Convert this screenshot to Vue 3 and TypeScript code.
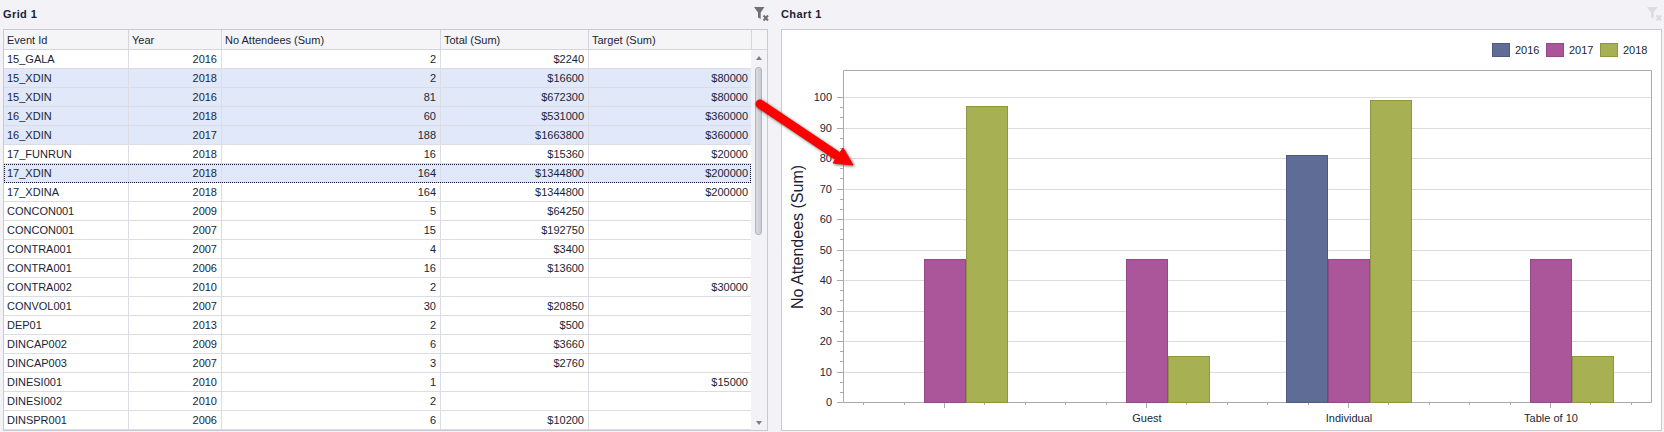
<script setup lang="ts">
type Row = { id: string; year: number; n: number; total: string; target: string; sel?: boolean; focus?: boolean };

const rows: Row[] = [
  { id: '15_GALA', year: 2016, n: 2, total: '$2240', target: '' },
  { id: '15_XDIN', year: 2018, n: 2, total: '$16600', target: '$80000', sel: true },
  { id: '15_XDIN', year: 2016, n: 81, total: '$672300', target: '$80000', sel: true },
  { id: '16_XDIN', year: 2018, n: 60, total: '$531000', target: '$360000', sel: true },
  { id: '16_XDIN', year: 2017, n: 188, total: '$1663800', target: '$360000', sel: true },
  { id: '17_FUNRUN', year: 2018, n: 16, total: '$15360', target: '$20000' },
  { id: '17_XDIN', year: 2018, n: 164, total: '$1344800', target: '$200000', sel: true, focus: true },
  { id: '17_XDINA', year: 2018, n: 164, total: '$1344800', target: '$200000' },
  { id: 'CONCON001', year: 2009, n: 5, total: '$64250', target: '' },
  { id: 'CONCON001', year: 2007, n: 15, total: '$192750', target: '' },
  { id: 'CONTRA001', year: 2007, n: 4, total: '$3400', target: '' },
  { id: 'CONTRA001', year: 2006, n: 16, total: '$13600', target: '' },
  { id: 'CONTRA002', year: 2010, n: 2, total: '', target: '$30000' },
  { id: 'CONVOL001', year: 2007, n: 30, total: '$20850', target: '' },
  { id: 'DEP01', year: 2013, n: 2, total: '$500', target: '' },
  { id: 'DINCAP002', year: 2009, n: 6, total: '$3660', target: '' },
  { id: 'DINCAP003', year: 2007, n: 3, total: '$2760', target: '' },
  { id: 'DINESI001', year: 2010, n: 1, total: '', target: '$15000' },
  { id: 'DINESI002', year: 2010, n: 2, total: '', target: '' },
  { id: 'DINSPR001', year: 2006, n: 6, total: '$10200', target: '' },
];

const headers = ['Event Id', 'Year', 'No Attendees (Sum)', 'Total (Sum)', 'Target (Sum)', ''];

const left = 843;
const right = 1651;
const top = 70;
const base = 402;
const unit = 3.05;
const catW = (right - left) / 4;
const barW = catW / 5;
const barStep = 42;
const yOf = (v: number) => base - v * unit;

const series = [
  { name: '2016', fill: '#5f6c96', stroke: '#4c5a85', x: 1492 },
  { name: '2017', fill: '#ab569b', stroke: '#944a87', x: 1546 },
  { name: '2018', fill: '#a8b054', stroke: '#8f9640', x: 1600 },
];

const cats = [
  { label: '', v: [0, 47, 97] },
  { label: 'Guest', v: [0, 47, 15] },
  { label: 'Individual', v: [81, 47, 99] },
  { label: 'Table of 10', v: [0, 47, 15] },
];

const bars = cats.flatMap((c, i) =>
  c.v.flatMap((v, s) =>
    v > 0
      ? [{
          key: `${i}-${s}`,
          x: Math.round(left + catW * (i + 0.5) + barStep * (s - 1) - 20.5) + 0.5,
          y: Math.round(yOf(v)) + 0.5,
          w: 41,
          h: base - Math.round(yOf(v)),
          fill: series[s].fill,
          stroke: series[s].stroke,
        }]
      : [],
  ),
);

const yMajor = Array.from({ length: 11 }, (_, i) => i * 10);
const yMinor = Array.from({ length: 31 }, (_, i) => i * (10 / 3)).filter((_, i) => i % 3 !== 0);
const xTicks = Array.from({ length: 20 }, (_, i) => ({
  x: Math.round(left + barW * (i + 0.5)) + 0.5,
  major: i % 5 === 2,
}));
</script>

<template>
  <div class="page">
    <section class="panel grid-panel">
      <header class="title">
        <span>Grid 1</span>
        <svg class="clear grid-clear" width="15" height="15" viewBox="0 0 15 15">
          <path d="M0 0H10.5L6.7 5.5V12L4 10.5V5.5Z" fill="#6f6f78" />
          <path d="M9.5 8.5L14 13.5M14 8.5L9.5 13.5" stroke="#6f6f78" stroke-width="2" fill="none" />
        </svg>
      </header>
      <div class="grid">
        <div class="head">
          <div v-for="(h, i) in headers" :key="i" class="hcell" :class="`c${i}`">{{ h }}</div>
        </div>
        <div class="body">
          <div class="rows">
            <div v-for="(r, i) in rows" :key="i" class="row" :class="{ sel: r.sel, focus: r.focus }">
              <div class="cell c0">{{ r.id }}</div>
              <div class="cell c1 num">{{ r.year }}</div>
              <div class="cell c2 num">{{ r.n }}</div>
              <div class="cell c3 num">{{ r.total }}</div>
              <div class="cell c4 num">{{ r.target }}</div>
            </div>
          </div>
          <div class="scrollbar">
            <span class="arrow up"></span>
            <span class="thumb"></span>
            <span class="arrow down"></span>
          </div>
        </div>
      </div>
    </section>

    <section class="panel chart-panel">
      <header class="title">
        <span>Chart 1</span>
        <svg class="clear" width="15" height="15" viewBox="0 0 15 15">
          <path d="M0 0H10.5L6.7 5.5V12L4 10.5V5.5Z" fill="#dcdce0" />
          <path d="M9.5 8.5L14 13.5M14 8.5L9.5 13.5" stroke="#dcdce0" stroke-width="2" fill="none" />
        </svg>
      </header>
      <div class="chart">
        <svg class="plot" width="879" height="400" viewBox="782 30 879 400">
          <g v-for="s in series" :key="s.name">
            <rect :x="s.x + 0.5" y="43.5" width="17" height="13" :fill="s.fill" :stroke="s.stroke" />
            <text :x="s.x + 23" y="54" class="lbl">{{ s.name }}</text>
          </g>

          <line v-for="v in yMajor.slice(1)" :key="v" :x1="left" :x2="right" :y1="Math.round(yOf(v)) + 0.5" :y2="Math.round(yOf(v)) + 0.5" class="gridline" />
          <path :d="`M${left + 0.5} ${top + 0.5}H${right + 0.5}V${base + 0.5}H${left + 0.5}Z`" class="frame" />

          <line v-for="v in yMajor" :key="'ma' + v" :x1="left - 6" :x2="left" :y1="Math.round(yOf(v)) + 0.5" :y2="Math.round(yOf(v)) + 0.5" class="tick" />
          <line v-for="v in yMinor" :key="'mi' + v" :x1="left - 3" :x2="left" :y1="Math.round(yOf(v)) + 0.5" :y2="Math.round(yOf(v)) + 0.5" class="tick" />
          <line v-for="t in xTicks" :key="t.x" :x1="t.x" :x2="t.x" :y1="base" :y2="base + (t.major ? 6 : 3)" class="tick" />

          <text v-for="v in yMajor" :key="'l' + v" x="832" :y="yOf(v) + 4" text-anchor="end" class="lbl">{{ v }}</text>

          <rect v-for="b in bars" :key="b.key" :x="b.x" :y="b.y" :width="b.w" :height="b.h" :fill="b.fill" :stroke="b.stroke" />

          <text v-for="(c, i) in cats" :key="'c' + i" :x="left + catW * (i + 0.5) + 1" y="422" text-anchor="middle" class="lbl">{{ c.label }}</text>

          <text class="axis-title" transform="translate(803 237) rotate(-90)" text-anchor="middle">No Attendees (Sum)</text>
        </svg>
      </div>
    </section>

    <svg class="callout" width="110" height="80" viewBox="0 0 110 80">
      <path d="M10 14L86 65" stroke="#f00" stroke-width="9" stroke-linecap="round" fill="none" />
      <path d="M93 58L103 75L83 73Z" fill="#f00" stroke="#f00" stroke-width="1" />
    </svg>
  </div>
</template>

<style scoped>
.page {
  position: relative;
  display: flex;
  gap: 13px;
  width: 1664px;
  height: 432px;
  padding: 0 2px 0 3px;
  box-sizing: border-box;
  background: #f3f3f7;
  color: #201f35;
  font: 11px "Liberation Sans", Arial, sans-serif;
  overflow: hidden;
}
.panel {
  display: flex;
  flex-direction: column;
}
.grid-panel {
  width: 765px;
  height: 430px;
}
.chart-panel {
  width: 881px;
  height: 431px;
}
.title {
  flex: 0 0 29px;
  display: flex;
  align-items: flex-start;
  justify-content: space-between;
  font-weight: 700;
  line-height: 28px;
  letter-spacing: 0.4px;
}
.clear {
  margin-top: 7px;
}
.grid-clear {
  margin-right: -1px;
}
.grid {
  flex: 1;
  display: flex;
  flex-direction: column;
  border: 1px solid #c9c9d2;
  background: #fff;
  box-sizing: border-box;
}
.head {
  display: flex;
  flex: 0 0 20px;
  box-sizing: border-box;
  background: #f5f5f8;
  border-bottom: 1px solid #d5d5de;
}
.hcell {
  box-sizing: border-box;
  padding: 1px 4px 0 3px;
  line-height: 18px;
  border-right: 1px solid #d5d5de;
  white-space: nowrap;
}
.hcell.c5 {
  flex: 1;
  border-right: 0;
}
.c0 { width: 125px; }
.c1 { width: 93px; }
.c2 { width: 219px; }
.c3 { width: 148px; }
.c4 { width: 163px; }
.body {
  flex: 1;
  display: flex;
  min-height: 0;
}
.rows {
  width: 747px;
  display: flex;
  flex-direction: column;
}
.row {
  display: flex;
  flex: 0 0 19px;
  box-sizing: border-box;
  border-bottom: 1px solid #dcdce5;
}
.row.sel {
  background: #e0e8fa;
}
.row.focus {
  outline: 1px dotted #14143a;
  outline-offset: -1px;
}
.cell {
  box-sizing: border-box;
  padding: 1px 4px 0 3px;
  line-height: 17px;
  border-right: 1px solid #dcdce5;
  white-space: nowrap;
  flex: none;
}
.cell.c4 {
  width: 162px;
  border-right: 0;
  padding-right: 3px;
}
.num {
  text-align: right;
}
.scrollbar {
  flex: 1;
  display: flex;
  flex-direction: column;
  align-items: center;
  background: #f3f3f7;
  padding-right: 1px;
}
.arrow {
  width: 0;
  height: 0;
  border-left: 3.5px solid transparent;
  border-right: 3.5px solid transparent;
}
.arrow.up {
  margin-top: 6px;
  border-bottom: 4px solid #7d7d88;
}
.arrow.down {
  margin-top: auto;
  margin-bottom: 5px;
  border-top: 4px solid #7d7d88;
}
.thumb {
  width: 7px;
  height: 168px;
  margin-top: 7px;
  box-sizing: border-box;
  border: 1px solid #b3b3bd;
  border-radius: 3px;
  background: linear-gradient(to right, #dcdce3, #c9c9d2);
}
.chart {
  flex: 1;
  border: 1px solid #c9c9d2;
  background: #fff;
  box-sizing: border-box;
}
.plot {
  display: block;
}
.lbl {
  font: 11px "Liberation Sans", Arial, sans-serif;
  fill: #201f35;
}
.axis-title {
  font: 16px "Liberation Sans", Arial, sans-serif;
  fill: #201f35;
}
.gridline {
  stroke: #dcdcdc;
}
.frame {
  fill: none;
  stroke: #aaaaaa;
}
.tick {
  stroke: #aaaaaa;
}
.callout {
  position: absolute;
  left: 750px;
  top: 90px;
  filter: drop-shadow(1.5px 1.5px 1.5px rgba(0, 0, 0, 0.6));
}
</style>
